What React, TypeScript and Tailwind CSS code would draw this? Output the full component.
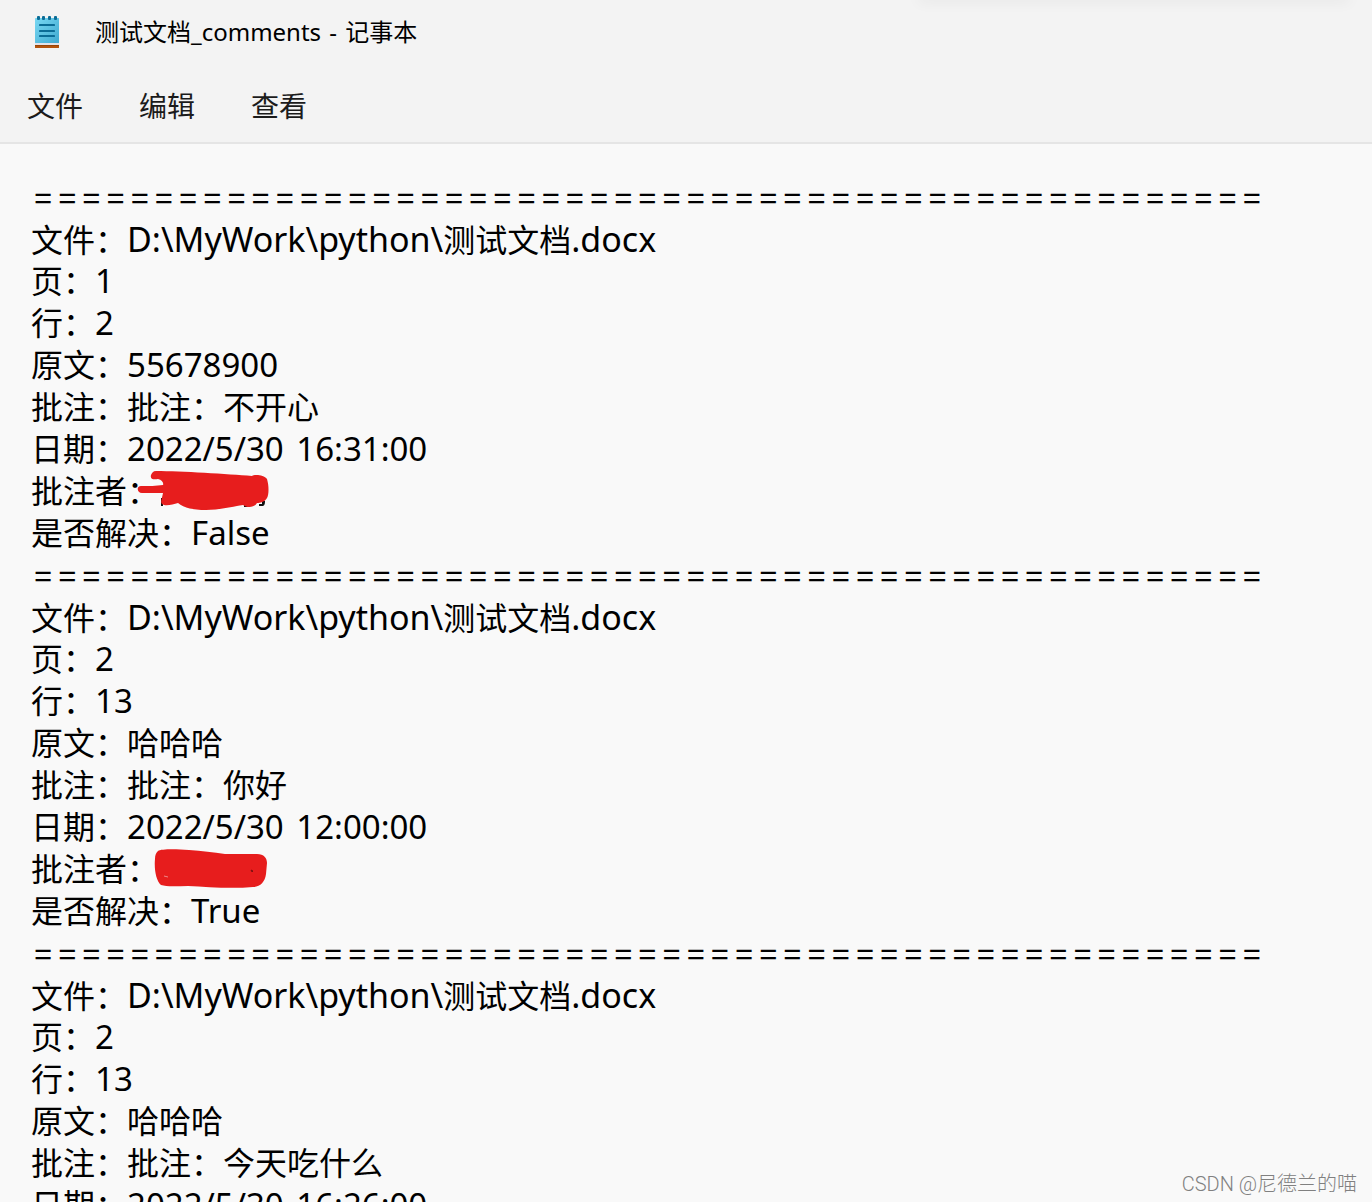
import type { ReactNode } from "react";

const RULE = "=".repeat(51);

type Comment = {
  page: string;
  line: string;
  source: string;
  latinSource?: boolean;
  note: string;
  date: string;
  time: string;
  author?: ReactNode;
  resolved?: string;
};

function Latin({ children }: { children: ReactNode }) {
  return <span className="text-[33px] leading-[42px]">{children}</span>;
}

function Line({ children }: { children: ReactNode }) {
  return <p className="relative h-[42px]">{children}</p>;
}

function NotepadIcon() {
  return (
    <svg className="h-8 w-6 shrink-0" viewBox="0 0 24 32" aria-hidden="true">
      <defs>
        <linearGradient id="sheet" x1="0" y1="0" x2="1" y2="1">
          <stop offset="0" stopColor="#79d8f3" />
          <stop offset="1" stopColor="#3fa9d0" />
        </linearGradient>
      </defs>
      <rect x="0" y="28" width="24" height="4" rx="0.5" fill="#b4530d" />
      <rect x="0" y="28" width="24" height="2" fill="#984507" />
      <rect x="0" y="26" width="24" height="3" fill="#e3e2e8" />
      <rect x="0" y="2" width="24" height="25" rx="0.5" fill="url(#sheet)" />
      <g fill="#0b6c96">
        <rect x="2" y="0" width="3" height="4" rx="1" />
        <rect x="7" y="0" width="3" height="4" rx="1" />
        <rect x="13" y="0" width="3" height="4" rx="1" />
        <rect x="19" y="0" width="3" height="4" rx="1" />
        <rect x="4" y="8" width="16" height="2" rx="0.4" />
        <rect x="4" y="14" width="16" height="2" rx="0.4" />
        <rect x="4" y="19" width="16" height="2" rx="0.4" />
      </g>
    </svg>
  );
}

function ScribbleOne() {
  return (
    <svg className="absolute top-0 left-[105px] h-11 w-[136px]" viewBox="0 0 136 44" role="img" aria-label="已涂抹">
      <g fill="#111">
        <path d="M34 9h8l-4 3zM25 28h2v8h-2z" />
        <path d="M108 35h5v2h-5zM126 31h3c0 4-1 5-3 5h-3v-2h3z" />
      </g>
      <path
        fill="#e71d1d"
        d="M20 1C45 1 92 4 116 6C119 4 128 5 131 9C133 16 133 24 131 28C129 32 124 33 121 33C118 38 111 38 107 35C94 37 82 40 70 40C58 40 48 38 42 33C37 34 30 37 26 34C24 32 26 29 27 23C20 23 13 23 6 23C1 23 0 16 5 16C13 16 20 16 27 15C28 13 26 10 22 9C17 10 14 9 15 5C16 3 17 1 20 1Z"
      />
    </svg>
  );
}

function ScribbleTwo() {
  return (
    <svg className="absolute top-0 left-[122px] h-11 w-[116px]" viewBox="0 0 116 44" role="img" aria-label="已涂抹">
      <path
        fill="#e71d1d"
        d="M5 3C8 1 22 1 36 2C49 3 60 4 72 6C83 6 95 6 104 6C111 6 114 10 114 15L113 26C112 34 107 39 100 39C78 41 55 39 35 38C25 38 14 39 8 37C3 33 1 21 2 11C2 7 3 5 5 3Z"
      />
      <path d="M98 22l2 1-1 1z" stroke="#7a1010" strokeWidth="1" fill="none" />
      <path d="M11 28l4 1" stroke="#e88" strokeWidth="1" fill="none" />
    </svg>
  );
}

const comments: Comment[] = [
  { page: "1", line: "2", source: "55678900", latinSource: true, note: "不开心", date: "2022/5/30", time: "16:31:00", author: <ScribbleOne />, resolved: "False" },
  { page: "2", line: "13", source: "哈哈哈", note: "你好", date: "2022/5/30", time: "12:00:00", author: <ScribbleTwo />, resolved: "True" },
  { page: "2", line: "13", source: "哈哈哈", note: "今天吃什么", date: "2022/5/30", time: "16:26:00" },
];

function Entry({ c }: { c: Comment }) {
  return (
    <section>
      <p className="h-[42px] font-['Inter',sans-serif] text-[37px] leading-10 font-light">{RULE}</p>
      <Line>
        文件：<span className="text-[34px] leading-[42px]">D:\MyWork\python\</span>测试文档
        <span className="text-[34px] leading-[42px]">.docx</span>
      </Line>
      <Line>页：<Latin>{c.page}</Latin></Line>
      <Line>行：<Latin>{c.line}</Latin></Line>
      <Line>原文：{c.latinSource ? <Latin>{c.source}</Latin> : c.source}</Line>
      <Line>批注：批注：{c.note}</Line>
      <Line>
        日期：<Latin>{c.date} <span className="ml-1">{c.time}</span></Latin>
      </Line>
      {c.resolved && (
        <>
          <Line>批注者：{c.author}</Line>
          <Line>是否解决：<Latin>{c.resolved}</Latin></Line>
        </>
      )}
    </section>
  );
}

export default function App() {
  return (
    <div className="relative flex h-screen flex-col overflow-hidden bg-[#f9f9f9] font-['Noto_Sans','Noto_Sans_CJK_SC',sans-serif] text-black">
      <header className="shrink-0 border-b-2 border-[#e5e5e5] bg-[#f3f3f3]">
        <div className="flex h-16 items-center gap-9 pl-[35px]">
          <NotepadIcon />
          <h1 className="text-2xl">测试文档_comments <span className="mx-0.5">-</span> 记事本</h1>
        </div>
        <nav className="flex h-[78px] items-center gap-14 pt-1.5 pl-[27px] text-[28px] text-[#1b1b1b]">
          <button type="button">文件</button>
          <button type="button">编辑</button>
          <button type="button">查看</button>
        </nav>
      </header>
      <div className="absolute -top-1 right-6 left-[920px] h-1 shadow-[0_0_14px_2px_rgba(0,0,0,0.06)]" />
      <main
        role="textbox"
        aria-multiline="true"
        aria-label="文本编辑器"
        className="min-h-0 flex-1 overflow-hidden pt-8 pl-[31px] text-[32px] leading-[42px] whitespace-nowrap"
      >
        {comments.map((c, i) => (
          <Entry key={i} c={c} />
        ))}
      </main>
      <footer className="absolute right-[15px] bottom-1 font-['Roboto','Noto_Sans_CJK_SC',sans-serif] text-xl font-light text-[#808080]">
        CSDN @尼德兰的喵
      </footer>
    </div>
  );
}
